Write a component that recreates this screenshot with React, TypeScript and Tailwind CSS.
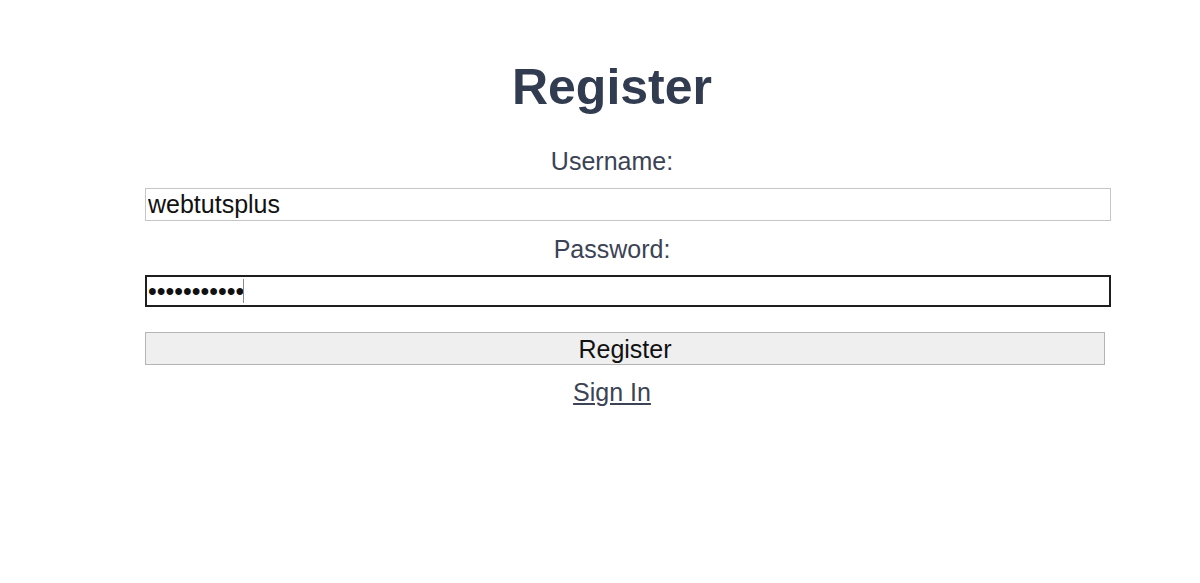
import React from 'react';

export default function App() {
  return (
    <div className="min-h-[583px] bg-white font-['Liberation_Sans',Arial,sans-serif]">
      {/* Form column */}
      <div className="ml-[145px] w-[934px] pt-[57px] text-center">
        <h1 className="text-[50px] font-bold leading-[60px] text-[#323c50]">Register</h1>

        <label htmlFor="username" className="mt-[30px] block text-[25px] leading-[28px] text-[#3b4354]">
          Username:
        </label>
        <input
          id="username"
          type="text"
          readOnly
          defaultValue="webtutsplus"
          className="mt-[13px] block h-[33px] w-[966px] border border-[#c6c6c6] px-[2px] text-left text-[25px] leading-[28px] text-[#111] outline-none"
        />

        <label htmlFor="password" className="mt-[14px] block text-[25px] leading-[28px] text-[#3b4354]">
          Password:
        </label>
        <div className="relative mt-[12px] w-[966px]">
          <input
            id="password"
            type="password"
            readOnly
            defaultValue="webtutsplu!"
            className="block h-[32px] w-full border-2 border-[#1e1e1e] px-[1px] text-left text-[25px] leading-[28px] text-[#111] outline-none"
          />
          {/* text caret */}
          <span className="pointer-events-none absolute left-[98px] top-[4px] h-[24px] w-px bg-[#8a8a8a]" />
        </div>

        <button
          type="button"
          className="mt-[25px] block h-[33px] w-[960px] border border-[#b4b4b4] bg-[#efefef] text-[25px] leading-[28px] text-[#111]"
        >
          Register
        </button>

        <a href="#" className="mt-[13px] inline-block text-[25px] leading-[28px] text-[#3b4354] underline">
          Sign In
        </a>
      </div>
    </div>
  );
}
